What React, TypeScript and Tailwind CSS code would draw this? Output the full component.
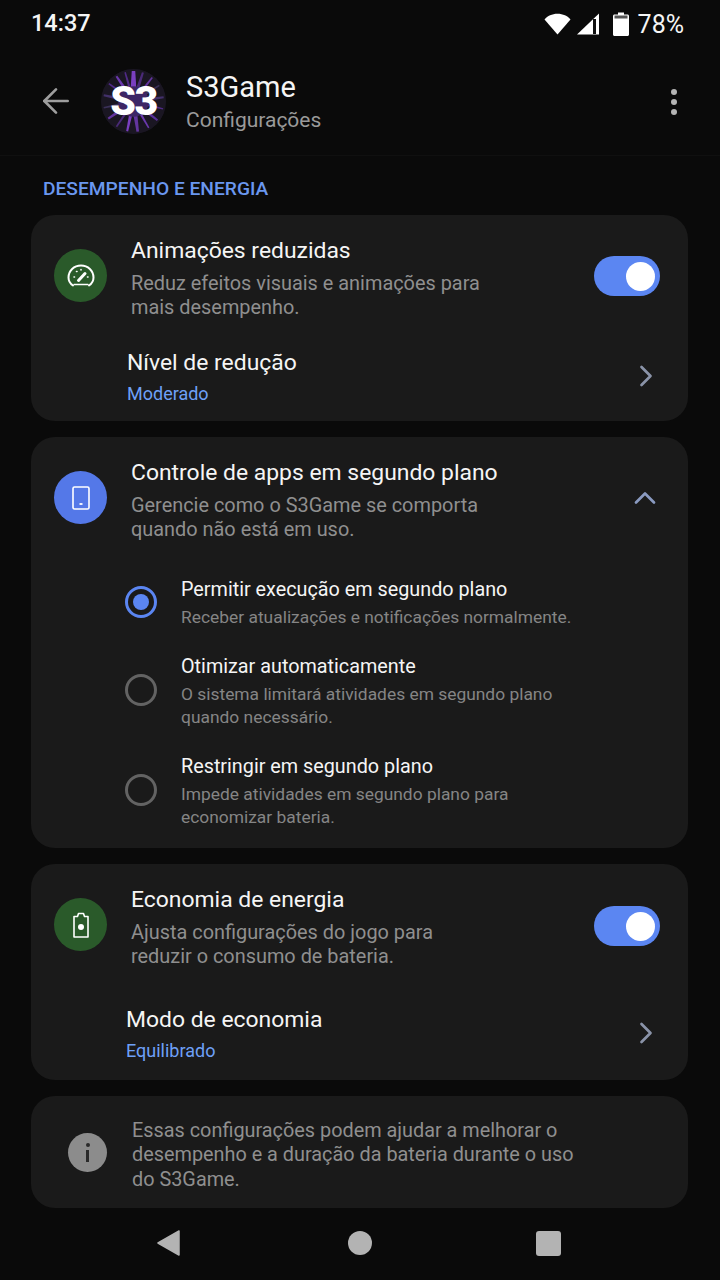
import { ChevronRight, ChevronUp, ArrowLeft } from "lucide-react";

// purple streaks of the logo: angle, width, colour
const streaks: [number, number, string][] = [
  [0, 7, "#7a3fc0"],
  [-16, 3, "#4f2a85"],
  [18, 4, "#4a2a78"],
  [38, 3, "#63359f"],
  [58, 3, "#3a3058"],
  [82, 4, "#42306a"],
  [104, 3, "#4f2a85"],
  [128, 4, "#5a309a"],
  [150, 3, "#6a38ad"],
  [172, 5, "#63359f"],
  [192, 4, "#7a3fc0"],
  [214, 3, "#4a2a78"],
  [236, 4, "#63359f"],
  [258, 3, "#3a3058"],
  [282, 4, "#42306a"],
  [306, 3, "#4f2a85"],
  [326, 4, "#6a38ad"],
];

function Logo() {
  return (
    <div className="relative flex h-[65px] w-[65px] items-center justify-center overflow-hidden rounded-full bg-[#17131f]">
      <svg viewBox="0 0 64 64" className="absolute inset-0 h-full w-full">
        <circle cx="32" cy="32" r="32" fill="#1a1622" />
        {streaks.map(([a, w, c]) => (
          <polygon
            key={a}
            points={`${32 - w / 2},32 ${32 + w / 2},32 ${32 + w / 4},2 ${32 - w / 4},2`}
            fill={c}
            transform={`rotate(${a} 32 32)`}
          />
        ))}
        <circle cx="32" cy="32" r="15" fill="#3d2666" />
      </svg>
      <span className="relative text-[41px] leading-none font-black tracking-[-1.5px] text-white">
        S3
      </span>
    </div>
  );
}

function StatusBar() {
  return (
    <div className="flex h-[48px] items-center justify-between pr-[36px] pl-[31px] text-[#f5f5f5]">
      <span className="text-[23.5px] leading-none font-medium">14:37</span>
      <div className="flex items-center">
        <svg viewBox="0 0 27 22" className="mt-[-1px] h-[22px] w-[27px]">
          <path d="M0.5 6.5C3.5 3 8 0.8 13.5 0.8S23.5 3 26.5 6.5L13.5 21.5Z" fill="white" />
        </svg>
        <svg viewBox="0 0 23 22" className="mt-[-1px] ml-[6px] h-[22px] w-[23px]">
          <path d="M0 21.5L22 0.5V21.5Z" fill="white" />
          <rect x="16" y="6" width="3" height="15" fill="#111" />
        </svg>
        <svg viewBox="0 0 16 24" className="ml-[13px] h-[24px] w-[16px]">
          <path d="M5 0.5H11V2.5H14.5C15.3 2.5 16 3.2 16 4V22.5C16 23.3 15.3 24 14.5 24H1.5C0.7 24 0 23.3 0 22.5V4C0 3.2 0.7 2.5 1.5 2.5H5Z" fill="white" />
          <rect x="1.5" y="3.5" width="13" height="3" fill="#555" />
        </svg>
        <span className="ml-[9px] text-[25px] leading-none">78%</span>
      </div>
    </div>
  );
}

function Header() {
  return (
    <div className="flex h-[108px] items-center border-b border-[#101010]">
      <ArrowLeft className="mt-[-2px] ml-[36px] h-[40px] w-[40px] text-[#9e9e9e]" strokeWidth={1.6} />
      <div className="ml-[25px]">
        <Logo />
      </div>
      <div className="mt-[2px] ml-[20px] flex-1">
        <div className="text-[29px] leading-[36px] text-[#f5f5f5]">S3Game</div>
        <div className="text-[21px] leading-[31px] text-[#9a9a9a]">Configurações</div>
      </div>
      <div className="mr-[43px] flex flex-col gap-[4px]">
        <span className="h-[6px] w-[6px] rounded-full bg-[#b5b5b5]" />
        <span className="h-[6px] w-[6px] rounded-full bg-[#b5b5b5]" />
        <span className="h-[6px] w-[6px] rounded-full bg-[#b5b5b5]" />
      </div>
    </div>
  );
}

function Toggle({ className }: { className?: string }) {
  return (
    <div className={`flex h-[40px] w-[66px] items-center justify-end rounded-full bg-[#5b86f2] pr-[5px] ${className ?? ""}`}>
      <div className="h-[29px] w-[29px] rounded-full bg-white" />
    </div>
  );
}

function IconCircle({ color, children }: { color: string; children: React.ReactNode }) {
  return (
    <div className={`flex h-[53px] w-[53px] shrink-0 items-center justify-center rounded-full ${color}`}>
      {children}
    </div>
  );
}

function GaugeIcon() {
  return (
    <svg viewBox="0 0 28 24" className="h-[24px] w-[28px]" fill="none" stroke="white" strokeWidth="2" strokeLinecap="round">
      <path d="M6 21.5C3 19.5 1.5 16.5 1.5 13.5C1.5 6.8 7 1.5 14 1.5S26.5 6.8 26.5 13.5C26.5 16.5 25 19.5 22 21.5" />
      <path d="M7 20.5H21" strokeWidth="1.4" />
      <path d="M11.5 16.5L18 9.5" strokeWidth="3" />
      <path d="M7 13H7.5M9.5 7.5H10M14 5.5V6M20.5 13H21" strokeWidth="1.6" />
    </svg>
  );
}

function PhoneIcon() {
  return (
    <svg viewBox="0 0 18 24" className="h-[24px] w-[18px]" fill="none" stroke="white" strokeWidth="1.6">
      <rect x="1" y="1" width="16" height="22" rx="1.5" />
      <path d="M7.5 18H10.5" strokeWidth="1.8" />
    </svg>
  );
}

function BatteryIcon() {
  return (
    <svg viewBox="0 0 16 26" className="h-[26px] w-[16px]" fill="none" stroke="white" strokeWidth="1.6">
      <path d="M1 4.5H4.5L5.5 1.5H10.5L11.5 4.5H15V25H1Z" strokeLinejoin="round" />
      <circle cx="8" cy="15" r="3" fill="white" stroke="none" />
    </svg>
  );
}

function SettingHead({
  icon,
  title,
  lines,
  right,
}: {
  icon: React.ReactNode;
  title: string;
  lines: string[];
  right: React.ReactNode;
}) {
  return (
    <div className="flex pt-[19px] pr-[28px] pl-[23px]">
      <div className="pt-[15px]">{icon}</div>
      <div className="ml-[24px] flex-1">
        <div className="mt-[2px] text-[22.9px] leading-[30px] text-[#f5f5f5]">{title}</div>
        <div className="mt-[6px]">
          {lines.map((l) => (
            <div key={l} className="text-[19.9px] leading-[24px] text-[#8f8f8f]">
              {l}
            </div>
          ))}
        </div>
      </div>
      {right}
    </div>
  );
}

function LinkRow({ title, value, left }: { title: string; value: string; left: string }) {
  return (
    <div className={`flex items-center pr-[24px] ${left}`}>
      <div className="flex-1">
        <div className="text-[22.9px] leading-[30px] text-[#f5f5f5]">{title}</div>
        <div className="mt-[4px] text-[18px] leading-[24px] text-[#6ea0f7]">{value}</div>
      </div>
      <ChevronRight className="mb-[3px] h-[36px] w-[36px] text-[#8a93a8]" strokeWidth={1.8} />
    </div>
  );
}

function Radio({ on }: { on?: boolean }) {
  return (
    <div className={`mb-[2px] flex h-[32px] w-[32px] shrink-0 items-center justify-center rounded-full border-[3px] ${on ? "border-[#5b86f2]" : "border-[#636363]"}`}>
      {on && <div className="h-[16px] w-[16px] rounded-full bg-[#5b86f2]" />}
    </div>
  );
}

function RadioRow({ title, lines, on }: { title: string; lines: string[]; on?: boolean }) {
  return (
    <div className="flex items-center pl-[94px]">
      <Radio on={on} />
      <div className="ml-[24px]">
        <div className="text-[19.8px] leading-[28px] text-[#f5f5f5]">{title}</div>
        <div className="mt-[2px]">
          {lines.map((l) => (
            <div key={l} className="text-[17.4px] leading-[23px] text-[#858585]">
              {l}
            </div>
          ))}
        </div>
      </div>
    </div>
  );
}

export default function App() {
  return (
    <div className="flex h-[1280px] w-[720px] flex-col overflow-hidden bg-[#0a0a0a] font-['Roboto',sans-serif]">
      <StatusBar />
      <Header />
      <div className="mt-[21px] pl-[43px] text-[19.2px] leading-[24px] font-medium text-[#6a97ef]">
        DESEMPENHO E ENERGIA
      </div>

      <div className="mt-[14px] flex flex-col gap-[16px] pr-[32px] pl-[31px]">
        <section className="h-[206px] rounded-[24px] bg-[#1a1a1a]">
          <SettingHead
            icon={
              <IconCircle color="bg-[#2a5a2a]">
                <GaugeIcon />
              </IconCircle>
            }
            title="Animações reduzidas"
            lines={["Reduz efeitos visuais e animações para", "mais desempenho."]}
            right={<Toggle className="mt-[22px]" />}
          />
          <div className="mt-[28px]">
            <LinkRow title="Nível de redução" value="Moderado" left="pl-[96px]" />
          </div>
        </section>

        <section className="h-[411px] rounded-[24px] bg-[#1a1a1a]">
          <SettingHead
            icon={
              <IconCircle color="bg-[#5478e8]">
                <PhoneIcon />
              </IconCircle>
            }
            title="Controle de apps em segundo plano"
            lines={["Gerencie como o S3Game se comporta", "quando não está em uso."]}
            right={<ChevronUp className="mt-[24px] mr-[-3px] h-[36px] w-[36px] text-[#8a9ac0]" strokeWidth={1.8} />}
          />
          <div className="mt-[34px] flex flex-col gap-[24px]">
            <RadioRow
              on
              title="Permitir execução em segundo plano"
              lines={["Receber atualizações e notificações normalmente."]}
            />
            <RadioRow
              title="Otimizar automaticamente"
              lines={["O sistema limitará atividades em segundo plano", "quando necessário."]}
            />
            <RadioRow
              title="Restringir em segundo plano"
              lines={["Impede atividades em segundo plano para", "economizar bateria."]}
            />
          </div>
        </section>

        <section className="h-[216px] rounded-[24px] bg-[#1a1a1a]">
          <SettingHead
            icon={
              <IconCircle color="bg-[#2a5a2a]">
                <BatteryIcon />
              </IconCircle>
            }
            title="Economia de energia"
            lines={["Ajusta configurações do jogo para", "reduzir o consumo de bateria."]}
            right={<Toggle className="mt-[23px]" />}
          />
          <div className="mt-[36px]">
            <LinkRow title="Modo de economia" value="Equilibrado" left="pl-[95px]" />
          </div>
        </section>

        <section className="flex h-[112px] items-center rounded-[24px] bg-[#1a1a1a] pl-[37px]">
          <div className="flex h-[39px] w-[39px] shrink-0 flex-col items-center justify-center rounded-full bg-[#8c8c8c]">
            <div className="h-[4px] w-[4px] rounded-full bg-[#2a2a2a]" />
            <div className="mt-[3px] h-[12px] w-[3px] bg-[#2a2a2a]" />
          </div>
          <div className="mt-[7px] ml-[25px] text-[19.85px] leading-[24.5px] text-[#8f8f8f]">
            <div>Essas configurações podem ajudar a melhorar o</div>
            <div>desempenho e a duração da bateria durante o uso</div>
            <div>do S3Game.</div>
          </div>
        </section>
      </div>

      <div className="flex flex-1 items-center pb-[2px]">
        <div className="ml-[157px]">
          <svg viewBox="0 0 24 26" className="h-[26px] w-[24px]">
            <path d="M22 1L1 13L22 25Z" fill="#b3b3b3" stroke="#b3b3b3" strokeWidth="1.5" strokeLinejoin="round" />
          </svg>
        </div>
        <div className="ml-[167px] h-[24px] w-[24px] rounded-full bg-[#b3b3b3]" />
        <div className="ml-[164px] h-[25px] w-[25px] rounded-[3px] bg-[#b3b3b3]" />
      </div>
    </div>
  );
}
